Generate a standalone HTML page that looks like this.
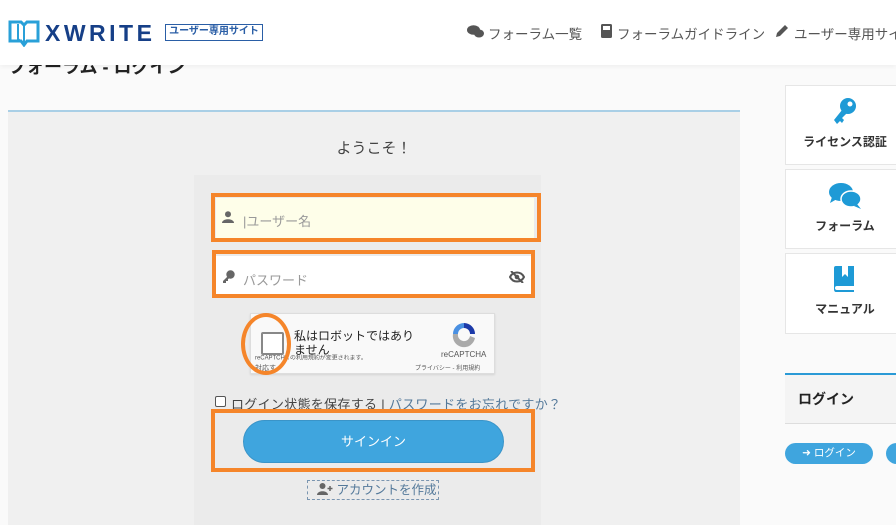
<!DOCTYPE html>
<html><head><meta charset="utf-8"><style>
*{margin:0;padding:0;box-sizing:border-box}
body{width:896px;height:525px;overflow:hidden;background:#fff;font-family:"Liberation Sans","Noto Sans CJK JP",sans-serif;position:relative;color:#333}
.a{position:absolute}
.nav{font-size:13.5px;color:#555;top:23px;white-space:nowrap}
.card{position:absolute;left:785px;width:120px;background:#fff;border:1px solid #e6e6e6;text-align:center;font-size:12px;font-weight:bold;color:#333}
.ob{position:absolute;border:4px solid #f5852a}
</style></head><body>
<div class="a" style="left:0;top:65px;width:896px;height:460px;background:#fafafa"></div>
<div class="a" style="left:8px;top:53px;font-size:18px;font-weight:bold;color:#222">フォーラム - ログイン</div>
<div class="a" style="left:0;top:0;width:896px;height:65px;background:#fff;box-shadow:0 2px 4px rgba(0,0,0,0.04)"></div>
<svg class="a" style="left:8px;top:19px" width="32" height="28" viewBox="0 0 32 28"><path d="M2 3 L13 3 L16 6 L19 3 L30 3 L30 22 L19 22 L16 26 L13 22 L2 22Z" fill="none" stroke="#29a0d8" stroke-width="3"/><path d="M16 6 L16 25" stroke="#29a0d8" stroke-width="2"/><path d="M10 5 L10 20 L16 25" fill="none" stroke="#29a0d8" stroke-width="2"/></svg>
<div class="a" style="left:45px;top:20px;font-size:23px;font-weight:bold;color:#163f87;letter-spacing:3.5px">XWRITE</div>
<div class="a" style="left:165px;top:24px;width:98px;height:17px;border:1.5px solid #2a5ea6;font-size:10px;color:#2a5ea6;text-align:center;line-height:14px;font-weight:bold;white-space:nowrap">ユーザー専用サイト</div>
<svg class="a" style="left:467px;top:25px" width="17" height="13" viewBox="0 0 17 13"><ellipse cx="6.5" cy="5" rx="6.5" ry="4.8" fill="#555"/><ellipse cx="12" cy="8.5" rx="5" ry="4" fill="#555"/></svg>
<div class="a nav" style="left:488px">フォーラム一覧</div>
<svg class="a" style="left:601px;top:24px" width="11" height="14" viewBox="0 0 11 14"><rect x="0" y="0" width="11" height="14" rx="1.5" fill="#555"/><rect x="2" y="2" width="7" height="4" fill="#fff"/></svg>
<div class="a nav" style="left:617px">フォーラムガイドライン</div>
<svg class="a" style="left:775px;top:24px" width="14" height="14" viewBox="0 0 14 14"><path d="M1 13 L2 9 L10 1 L13 4 L5 12Z" fill="#555"/></svg>
<div class="a nav" style="left:794px">ユーザー専用サイト</div>

<div class="a" style="left:8px;top:110px;width:732px;height:2px;background:#a9cfe6"></div>
<div class="a" style="left:8px;top:112px;width:732px;height:413px;background:#f0f0f0"></div>
<div class="a" style="left:8px;top:137px;width:732px;text-align:center;font-size:15px;color:#444">ようこそ！</div>
<div class="a" style="left:194px;top:175px;width:347px;height:350px;background:#ebebeb"></div>

<div class="a" style="left:216px;top:198px;width:318px;height:40px;background:#fefee9"></div>
<svg class="a" style="left:222px;top:211px" width="12" height="12" viewBox="0 0 12 12"><circle cx="6" cy="3.2" r="3" fill="#666"/><path d="M0 12 C0 7 12 7 12 12Z" fill="#666"/></svg>
<div class="a" style="left:243px;top:211px;font-size:13px;color:#999">|ユーザー名</div>
<div class="ob" style="left:211px;top:193px;width:330px;height:49px"></div>

<div class="a" style="left:216px;top:256px;width:316px;height:38px;background:#fff"></div>
<svg class="a" style="left:222px;top:270px" width="13" height="13" viewBox="0 0 13 13"><circle cx="8.5" cy="4.5" r="4.2" fill="#666"/><path d="M6 6 L1 11 L1 13 L4 13 L4 11 L6 11 L6 9 L8 8Z" fill="#666"/></svg>
<div class="a" style="left:243px;top:270px;font-size:13px;color:#999">パスワード</div>
<svg class="a" style="left:509px;top:271px" width="16" height="12" viewBox="0 0 16 12"><path d="M1 6 C4 0 12 0 15 6 C12 12 4 12 1 6Z" fill="none" stroke="#555" stroke-width="2"/><circle cx="8" cy="6" r="2.3" fill="#555"/><path d="M2 0 L14 12" stroke="#555" stroke-width="2"/></svg>
<div class="ob" style="left:212px;top:250px;width:323px;height:48px"></div>

<div class="a" style="left:250px;top:313px;width:245px;height:61px;background:#f9f9f9;border:1px solid #ddd;box-shadow:0 1px 2px rgba(0,0,0,.1)"></div>
<div class="a" style="left:261px;top:332px;width:23px;height:23px;border:2px solid #888;background:#fff;border-radius:2px"></div>
<div class="a" style="left:294px;top:329px;font-size:12px;color:#222;line-height:14px;width:130px;white-space:nowrap">私はロボットではあり<br>ません</div>
<div class="a" style="left:255px;top:353px;font-size:7px;color:#555;white-space:nowrap;transform:scale(0.85);transform-origin:left">reCAPTCHA の利用規約が変更されます。</div>
<div class="a" style="left:255px;top:363px;font-size:7px;color:#555">対応す..</div>
<svg class="a" style="left:450px;top:320px" width="28" height="28" viewBox="0 0 28 28"><path d="M14 3 A11 11 0 0 1 25 14 L20 14 A6 6 0 0 0 14 8Z" fill="#1c3aa9"/><path d="M3 14 A11 11 0 0 1 14 3 L14 8 A6 6 0 0 0 8 14Z" fill="#4a90e2"/><path d="M3 14 L8 14 A6 6 0 0 0 20 16 L25 18 A11 11 0 0 1 3 14Z" fill="#aaa"/></svg>
<div class="a" style="left:441px;top:350px;font-size:8px;color:#555">reCAPTCHA</div>
<div class="a" style="left:415px;top:363px;font-size:6px;color:#555;white-space:nowrap">プライバシー - 利用規約</div>
<div class="a" style="left:241px;top:313px;width:50px;height:62px;border:4px solid #f5852a;border-radius:50%"></div>

<div class="a" style="left:215px;top:396px;width:11px;height:11px;border:1.5px solid #555;border-radius:2px;background:#fff"></div>
<div class="a" style="left:231px;top:394px;font-size:13px;color:#444;white-space:nowrap;letter-spacing:0.3px">ログイン状態を保存する | <span style="color:#54799a">パスワードをお忘れですか？</span></div>

<div class="a" style="left:243px;top:420px;width:261px;height:43px;background:#3fa5de;border-radius:22px;border:1px solid #3a94c8;color:#fff;font-size:13px;text-align:center;line-height:41px">サインイン</div>
<div class="ob" style="left:211px;top:409px;width:324px;height:63px"></div>

<div class="a" style="left:307px;top:480px;width:132px;height:20px;border:1px dashed #7a95b0;font-size:12.5px;color:#54799a;line-height:18px;padding-left:9px;white-space:nowrap"><svg width="16" height="12" viewBox="0 0 16 12" style="vertical-align:-1px"><circle cx="5.5" cy="3" r="3" fill="#666"/><path d="M0 12 C0 7 11 7 11 12Z" fill="#666"/><path d="M13 3 V8 M10.5 5.5 H15.5" stroke="#666" stroke-width="1.5"/></svg> アカウントを作成</div>

<div class="card" style="top:85px;height:80px"><svg width="24" height="28" viewBox="0 0 24 28" style="margin-top:12px"><circle cx="15" cy="8" r="8" fill="#1e9ad6"/><circle cx="17" cy="6" r="2.5" fill="#fff"/><path d="M9 12 L1 22 L4 26 L7 23 L9 25 L11 22 L9 20 L14 15Z" fill="#1e9ad6"/></svg><div style="margin-top:4px;white-space:nowrap">ライセンス認証</div></div>
<div class="card" style="top:169px;height:80px"><svg width="34" height="28" viewBox="0 0 34 28" style="margin-top:12px"><ellipse cx="13" cy="10" rx="12" ry="9" fill="#1e9ad6"/><path d="M4 15 L2 21 L9 17Z" fill="#1e9ad6"/><ellipse cx="23" cy="17" rx="10" ry="8" fill="#1e9ad6" stroke="#fff" stroke-width="1.5"/><path d="M29 22 L33 27 L26 24Z" fill="#1e9ad6"/></svg><div style="margin-top:4px">フォーラム</div></div>
<div class="card" style="top:253px;height:81px"><svg width="22" height="26" viewBox="0 0 22 26" style="margin-top:12px"><path d="M0 2 Q0 0 2 0 L20 0 L20 20 L3 20 Q1 20 1 22 Q1 24 3 24 L20 24 L20 26 L2 26 Q0 26 0 23Z" fill="#1e9ad6"/><path d="M8 0 L8 11 L11 8 L14 11 L14 0" fill="#fff"/></svg><div style="margin-top:5px">マニュアル</div></div>
<div class="a" style="left:785px;top:373px;width:111px;height:2px;background:#2a9ad6"></div>
<div class="a" style="left:785px;top:375px;width:111px;height:49px;background:#f4f4f4;border-bottom:1px solid #ddd;font-size:14px;font-weight:bold;color:#222;padding:14px 0 0 13px">ログイン</div>
<div class="a" style="left:785px;top:443px;width:88px;height:21px;background:#3fa5de;border-radius:11px;color:#fff;font-size:10.5px;text-align:center;line-height:20px">➜ ログイン</div>
<div class="a" style="left:886px;top:443px;width:30px;height:21px;background:#3fa5de;border-radius:11px"></div>
</body></html>
